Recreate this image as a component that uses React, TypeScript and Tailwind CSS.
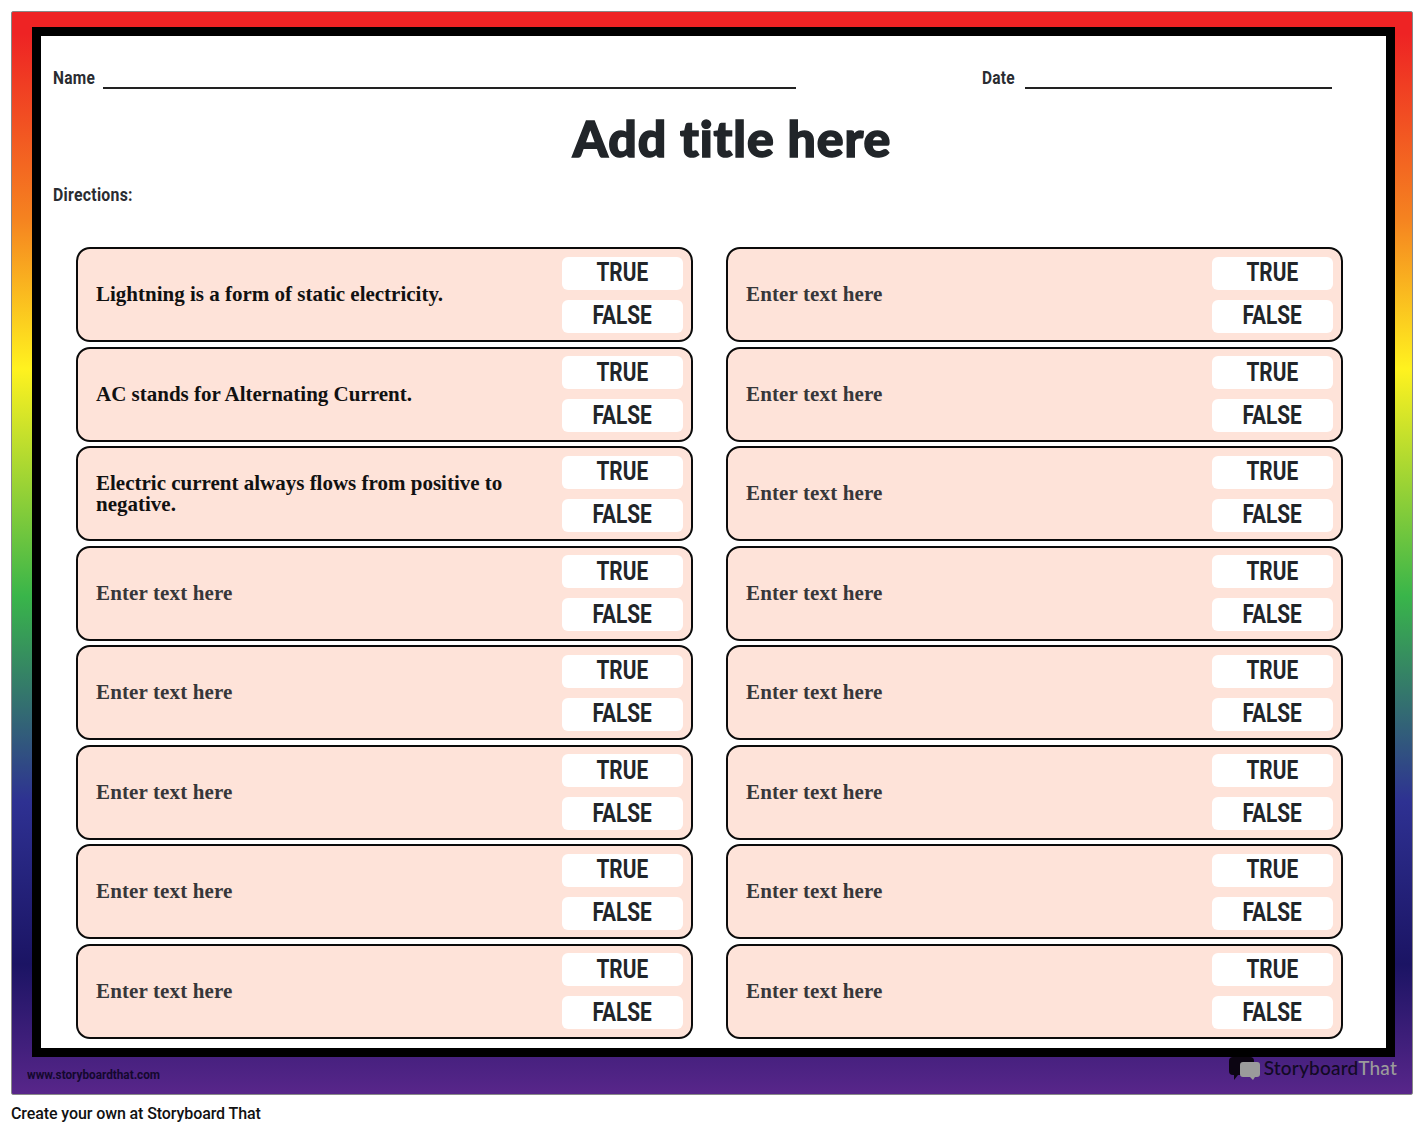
const serif = "font-['Liberation_Serif',serif]";
const cond = "font-['Roboto',sans-serif]";

function Narrow({ children, className }: { children: string; className: string }) {
  return <span className={`inline-block whitespace-nowrap ${className}`}>{children}</span>;
}

function Choice({ label }: { label: string }) {
  return (
    <div className={`flex h-[33px] items-center justify-center rounded-[6px] bg-white pb-[2px] text-[26px] font-bold leading-[30px] text-[#212529] ${cond}`}>
      <Narrow className="scale-x-[0.8]">{label}</Narrow>
    </div>
  );
}

function Card({ text, filled }: { text: string; filled?: boolean }) {
  return (
    <div className="flex h-[95px] items-center rounded-[14px] border-2 border-[#0b0b0b] bg-[#fee3d9] pl-[18px] pr-[8px]">
      <div className={`flex-1 pr-[40px] text-[21px] font-bold leading-[21px] ${serif} ${filled ? "text-[#111]" : "tracking-[0.13px] text-[#37373a]"}`}>
        {text}
      </div>
      <div className="flex w-[121px] flex-col gap-[10px]">
        <Choice label="TRUE" />
        <Choice label="FALSE" />
      </div>
    </div>
  );
}

const left = [
  "Lightning is a form of static electricity.",
  "AC stands for Alternating Current.",
  "Electric current always flows from positive to negative.",
];

const label = "origin-left scale-x-[0.86] tracking-[0.3px]";

export default function App() {
  return (
    <div className="min-h-[1132px] bg-white pl-[11px] pt-[11px]">
      <div className="h-[1084px] w-[1402px] rounded-[2px] border border-[#888] bg-[linear-gradient(180deg,#ee2324_0%,#ee2324_2%,#f58220_19%,#fff21f_33%,#39b54a_54%,#2e3192_73%,#1b1464_88%,#58268a_100%)] pl-[20px] pr-[17px] pt-[15px]">
        <div className="h-[1030px] w-[1363px] border-[9px] border-black bg-white pl-[12px] pr-[9px] pt-[30px]">
          <div className={`flex items-end text-[18px] font-bold leading-[24px] text-[#2a2c31] ${cond}`}>
            <span className="w-[50px]"><Narrow className={label}>Name</Narrow></span>
            <span className="mb-[1px] h-[2px] w-[693px] bg-[#222]" />
            <span className="ml-[186px] w-[43px]"><Narrow className={label}>Date</Narrow></span>
            <span className="mb-[1px] h-[2px] w-[307px] bg-[#222]" />
          </div>
          <h1 className="mt-[20px] pl-[34px] text-center font-['Lato',sans-serif] text-[50px] font-black leading-[56px] tracking-[0.9px] text-[#212529] [-webkit-text-stroke:1.5px_#212529]">
            Add title here
          </h1>
          <div className={`mt-[17px] text-[18px] font-bold leading-[24px] text-[#2a2c31] ${cond}`}>
            <Narrow className="origin-left scale-x-[0.88] tracking-[0.3px]">Directions:</Narrow>
          </div>
          <div className="ml-[23px] mt-[40px] grid grid-cols-[617px_617px] gap-x-[33px] gap-y-[4.5px]">
            {Array.from({ length: 8 }).flatMap((_, i) => [
              <Card key={`l${i}`} text={left[i] ?? "Enter text here"} filled={i < 3} />,
              <Card key={`r${i}`} text="Enter text here" />,
            ])}
          </div>
        </div>
        <div className="flex items-start justify-between">
          <span className={`ml-[-5px] mt-[11px] text-[12px] font-bold leading-[14px] text-[#14082e] ${cond}`}>
            <Narrow className="origin-left scale-x-[0.98]">www.storyboardthat.com</Narrow>
          </span>
          <div className="mr-[-2px] flex items-start">
            <svg width="31" height="23" viewBox="0 0 31 23">
              <path d="M4 0h17a4 4 0 0 1 4 4v10a4 4 0 0 1-4 4H9l-4 5v-5H4a4 4 0 0 1-4-4V4a4 4 0 0 1 4-4z" fill="#0c0512" />
              <path d="M14 5h14a3 3 0 0 1 3 3v9a3 3 0 0 1-3 3h-2l-2 3-3-3h-7a3 3 0 0 1-3-3V8a3 3 0 0 1 3-3z" fill="#9b9b9b" />
            </svg>
            <span className="ml-[4px] mt-[-1px] font-['Lato',sans-serif] text-[19px] font-medium leading-[24px] tracking-[0.2px]">
              <span className="text-[#120a24]">Storyboard</span>
              <span className="text-[#9b9b9b]">That</span>
            </span>
          </div>
        </div>
      </div>
      <div className="mt-[9px] font-['Roboto',sans-serif] text-[16px] font-medium leading-[20px] tracking-[-0.1px] text-[#111]">Create your own at Storyboard That</div>
    </div>
  );
}
